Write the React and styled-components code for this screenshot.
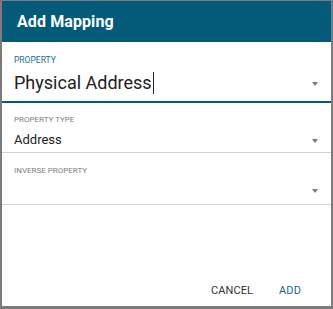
import React from "react"
import styled, { createGlobalStyle } from "styled-components"

const teal = "#045a79"

const GlobalStyle = createGlobalStyle`
  html, body {
    margin: 0;
    padding: 0;
    background: #7c7c7c;
    font-family: Roboto, "Liberation Sans", sans-serif;
  }
`

const Backdrop = styled.div`
  width: 333px;
  height: 309px;
  box-sizing: border-box;
  padding: 1px 2px 3px 2px;
`

const Dialog = styled.div`
  width: 100%;
  height: 100%;
  background: #fff;
  display: flex;
  flex-direction: column;
`

const Header = styled.div`
  height: 41px;
  background: ${teal};
  color: #fff;
  display: flex;
  align-items: center;
  padding: 0 15px;
  h2 {
    margin: 0;
    font-size: 16px;
    font-weight: 700;
    letter-spacing: 0.1px;
  }
`

const Field = styled.div`
  padding: ${(p) => p.$pt}px 12px ${(p) => p.$pb}px 12px;
  border-bottom: ${(p) => (p.$active ? `2px solid ${teal}` : "1px solid #c8d6de")};
`

const Label = styled.div`
  font-size: ${(p) => (p.$active ? 8.5 : 8)}px;
  line-height: 10px;
  text-transform: uppercase;
  color: ${(p) => (p.$active ? "#17708f" : "#808080")};
`

const ValueRow = styled.div`
  display: flex;
  align-items: center;
  margin-top: ${(p) => p.$gap}px;
  height: ${(p) => p.$h}px;
`

const Value = styled.div`
  flex: 1;
  font-size: ${(p) => p.$size}px;
  line-height: ${(p) => p.$h}px;
  color: #212121;
  display: flex;
  align-items: center;
  white-space: nowrap;
`

const Caret = styled.span`
  display: inline-block;
  width: 1px;
  height: 22px;
  background: #222;
  margin-left: 1px;
`

const Arrow = styled.span`
  width: 0;
  height: 0;
  border-left: 3.5px solid transparent;
  border-right: 3.5px solid transparent;
  border-top: 4px solid #7a7a7a;
  margin-right: 1px;
  margin-top: ${(p) => p.$dy || 0}px;
`

const Spacer = styled.div`
  flex: 1;
`

const Actions = styled.div`
  display: flex;
  justify-content: flex-end;
  gap: 10px;
  padding: 0 22px 3px 0;
`

const Button = styled.button`
  border: none;
  background: none;
  font-family: Roboto, "Liberation Sans", sans-serif;
  font-size: 11px;
  font-weight: 400;
  letter-spacing: 0.1px;
  padding: 6px 8px;
  color: ${(p) => (p.$primary ? "#17678f" : "#333")};
`

export default function App() {
  return (
    <>
      <GlobalStyle />
      <Backdrop>
        <Dialog>
          <Header>
            <h2>Add Mapping</h2>
          </Header>
          <Field $active $pt={13} $pb={6}>
            <Label $active>Property</Label>
            <ValueRow $gap={6} $h={24}>
              <Value $size={18} $h={24}>
                Physical Address
                <Caret />
              </Value>
              <Arrow $dy={2} />
            </ValueRow>
          </Field>
          <Field $pt={12} $pb={3}>
            <Label>Property Type</Label>
            <ValueRow $gap={6} $h={18}>
              <Value $size={13} $h={18}>Address</Value>
              <Arrow $dy={2} />
            </ValueRow>
          </Field>
          <Field $pt={13} $pb={5}>
            <Label>Inverse Property</Label>
            <ValueRow $gap={5} $h={18}>
              <Value $size={13} $h={18} />
              <Arrow $dy={2} />
            </ValueRow>
          </Field>
          <Spacer />
          <Actions>
            <Button>CANCEL</Button>
            <Button $primary>ADD</Button>
          </Actions>
        </Dialog>
      </Backdrop>
    </>
  )
}
